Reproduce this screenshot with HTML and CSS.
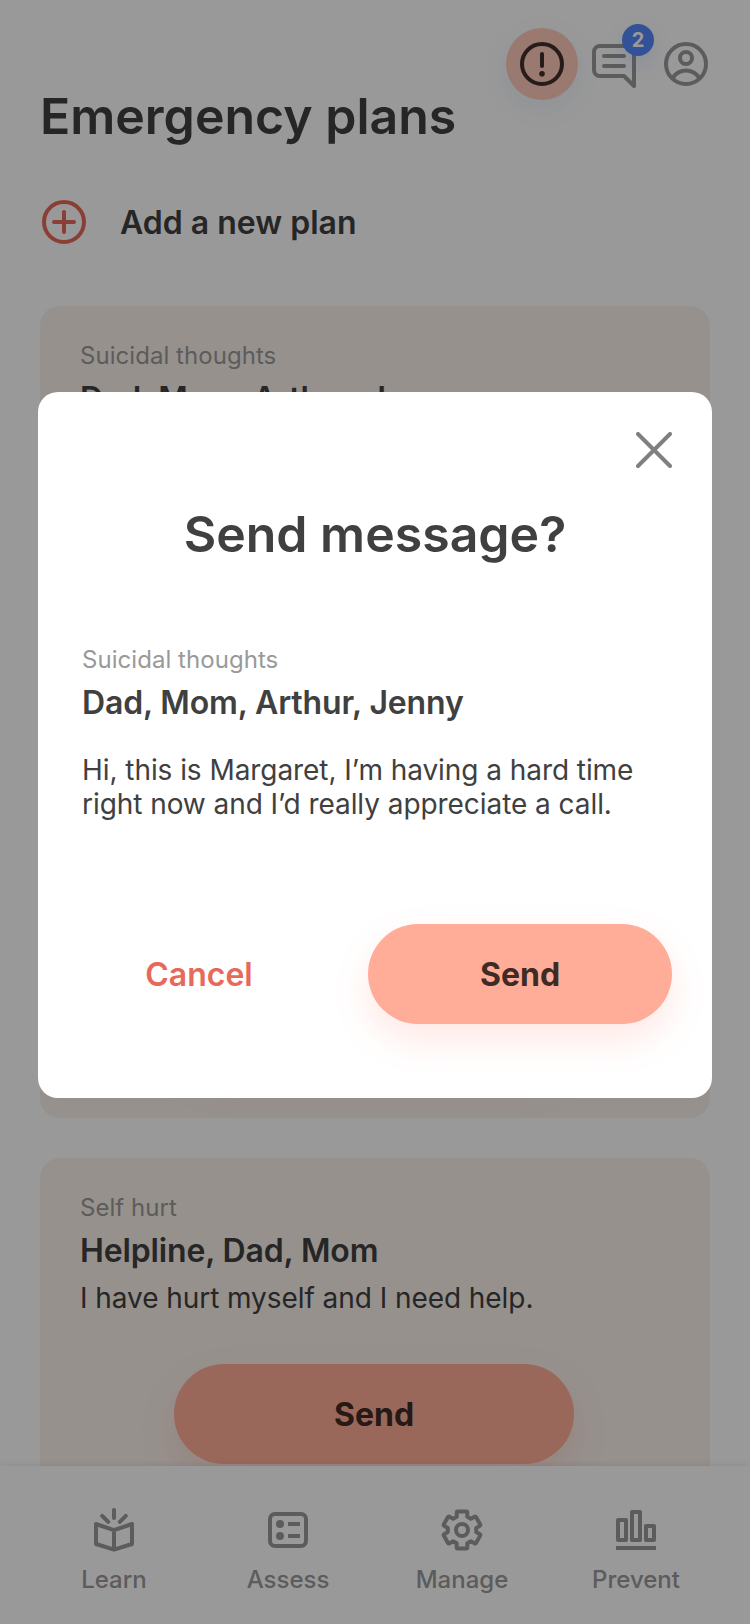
FILE: index.html
```html
<!DOCTYPE html>
<html lang="en">
<head>
<meta charset="utf-8">
<title>Emergency plans</title>
<link rel="stylesheet" href="styles.css">
</head>
<body>
<div class="app">
  <main class="screen">
    <header class="header">
      <h1 class="title">Emergency plans</h1>
      <div class="actions">
        <div class="alert">
          <svg class="icon" viewBox="0 0 48 48"><circle cx="24" cy="24" r="20"/><path d="M24 14v12"/><circle class="solid" cx="24" cy="33.8" r="2.8"/></svg>
        </div>
        <div class="chat">
          <svg class="icon" viewBox="0 0 48 48"><path d="M44 4H10a6 6 0 0 0-6 6v18a6 6 0 0 0 6 6h24l10 10z"/><path d="M14 14h20M14 24h20"/></svg>
          <span class="badge">2</span>
        </div>
        <svg class="icon profile" viewBox="0 0 48 48"><circle cx="24" cy="24" r="20"/><circle cx="24" cy="18" r="6"/><path d="M10.5 38C14 33 19 30.5 24 30.5S34 33 37.5 38"/></svg>
      </div>
    </header>
    <div class="add">
      <svg class="icon" viewBox="0 0 48 48"><circle cx="24" cy="24" r="20"/><path d="M24 14v20M14 24h20"/></svg>
      <span class="add-text">Add a new plan</span>
    </div>
    <section class="card card-tall">
      <p class="label">Suicidal thoughts</p>
      <p class="names">Dad, Mom, Arthur, Jenny</p>
      <div class="button card-button">Send</div>
    </section>
    <section class="card">
      <p class="label">Self hurt</p>
      <p class="names">Helpline, Dad, Mom</p>
      <p class="message">I have hurt myself and I need help.</p>
      <div class="button card-button">Send</div>
    </section>
  </main>
  <nav class="nav">
    <div class="tab">
      <svg class="icon" viewBox="0 0 48 48"><path d="M24 4v8M12.2 9.8l6 6M35.8 9.8l-6 6M24 43.7L6 38V18l18 6.2L42 18v20zM24 24.2v19"/></svg>
      <span>Learn</span>
    </div>
    <div class="tab">
      <svg class="icon" viewBox="0 0 48 48"><rect x="6" y="8" width="36" height="32" rx="5"/><circle class="solid" cx="16" cy="18" r="4"/><circle class="solid" cx="16" cy="30" r="4"/><path class="flat" d="M24 18h12M24 30h12"/></svg>
      <span>Assess</span>
    </div>
    <div class="tab">
      <svg class="icon" viewBox="-24 -24 48 48"><circle r="6"/><path d="M-4.3-18.6H4.3Q5.3-18.6 5.3-17.6V-13.3L8.9-11.2 12.6-13.4Q13.5-13.8 14-13L18.2-5.6Q18.7-4.7 17.8-4.2L14.2-2.1V2.1L17.8 4.2Q18.7 4.7 18.2 5.6L14 13Q13.5 13.8 12.6 13.4L8.9 11.2 5.3 13.3V17.6Q5.3 18.6 4.3 18.6H-4.3Q-5.3 18.6-5.3 17.6V13.3L-8.9 11.2-12.6 13.4Q-13.5 13.8-14 13L-18.2 5.6Q-18.7 4.7-17.8 4.2L-14.2 2.1V-2.1L-17.8-4.2Q-18.7-4.7-18.2-5.6L-14-13Q-13.5-13.8-12.6-13.4L-8.9-11.2-5.3-13.3V-17.6Q-5.3-18.6-4.3-18.6z"/></svg>
      <span>Manage</span>
    </div>
    <div class="tab">
      <svg class="icon" viewBox="0 0 48 48"><path d="M6 14h8v20H6zM20 6h8v28h-8zM34 20h8v14h-8z"/><path class="flat" d="M4 42h40"/></svg>
      <span>Prevent</span>
    </div>
  </nav>
  <div class="overlay">
    <div class="dialog">
      <svg class="close" viewBox="0 0 36 36"><path d="M2 2l32 32M34 2L2 34"/></svg>
      <h2 class="title dialog-title">Send message?</h2>
      <p class="label">Suicidal thoughts</p>
      <p class="names">Dad, Mom, Arthur, Jenny</p>
      <p class="message dialog-message">Hi, this is Margaret, I’m having a hard time right now and I’d really appreciate a call.</p>
      <div class="choices">
        <div class="cancel">Cancel</div>
        <div class="button">Send</div>
      </div>
    </div>
  </div>
</div>
</body>
</html>
```
FILE: styles.css
```css
* { box-sizing: border-box; }
body, h1, h2, p { margin: 0; }
body { font-family: Inter, "Liberation Sans", sans-serif; color: #404040; background: #fff; }

.app { position: relative; display: flex; flex-direction: column; width: 750px; height: 1624px; overflow: hidden; }
.screen { flex: 1; min-height: 0; overflow: hidden; padding: 0 40px; display: flex; flex-direction: column; }

.icon { display: block; flex: none; width: 48px; height: 48px; fill: none; stroke: currentColor; stroke-width: 4; stroke-linecap: round; stroke-linejoin: round; }
.icon .solid { fill: currentColor; stroke: none; }
.icon .flat { stroke-linecap: butt; }

.header { flex: none; display: flex; justify-content: space-between; height: 146px; }
.title { font-size: 50px; line-height: 60px; font-weight: 600; white-space: nowrap; }
.header .title { padding-top: 86px; }
.actions { display: flex; align-items: center; height: 72px; margin-top: 28px; color: #999; }
.alert { display: flex; align-items: center; justify-content: center; width: 72px; height: 72px; border-radius: 50%; background: #ffcabb; color: #40302c; box-shadow: 0 8px 24px rgba(90, 140, 220, .1); }
.chat { position: relative; margin: 4px 24px 0 12px; }
.badge { position: absolute; left: 32px; top: -18px; width: 32px; height: 32px; border-radius: 50%; background: #5688fa; color: #fff; font-size: 20px; line-height: 32px; font-weight: 700; text-align: center; box-shadow: 0 8px 20px rgba(86, 136, 250, .14); }

.add { flex: none; display: flex; align-items: center; gap: 32px; margin: 52px 0 60px; color: #e7695a; }
.add-text { padding-top: 2px; color: #404040; font-size: 32px; line-height: 40px; font-weight: 600; }

.card { flex: none; display: flex; flex-direction: column; padding: 35px 40px 50px; margin-bottom: 40px; border-radius: 20px; background: #fbf2ec; }
.card-tall { height: 812px; }
.label { font-size: 24px; line-height: 30px; color: #999; letter-spacing: .05px; }
.names { font-size: 32px; line-height: 40px; font-weight: 600; margin-top: 8px; letter-spacing: -.14px; }
.message { font-size: 28px; line-height: 34px; margin-top: 10px; letter-spacing: -.06px; }

.button { display: flex; align-items: center; justify-content: center; height: 100px; border-radius: 50px; background: #ffad98; color: #402a25; font-size: 32px; font-weight: 700; box-shadow: 0 16px 36px rgba(255, 100, 80, .15); }
.card-button { flex: none; width: 400px; margin: 49px 0 0 94px; }
.card-tall .card-button { margin-top: auto; }

.nav { position: relative; flex: none; display: flex; height: 158px; padding: 40px 27px 0; background: #fff; color: #999; box-shadow: 0 0 8px rgba(0, 0, 0, .1); }
.tab { flex: 1; display: flex; flex-direction: column; align-items: center; gap: 11px; font-size: 24px; line-height: 30px; font-weight: 500; }

.overlay { position: absolute; inset: 0; padding: 392px 38px 0; background: rgba(0, 0, 0, .4); }
.dialog { display: flex; flex-direction: column; height: 706px; padding: 40px 40px 74px 44px; border-radius: 20px; background: #fff; }
.close { display: block; width: 36px; height: 36px; align-self: flex-end; fill: none; stroke: #808080; stroke-width: 4; stroke-linecap: round; }
.dialog-title { margin: 36px 4px 81px 0; text-align: center; }
.dialog-message { margin-top: 30px; width: 580px; }
.choices { display: grid; grid-template-columns: 234px 304px; justify-content: space-between; align-items: center; margin-top: auto; }
.cancel { color: #e7695a; font-size: 32px; font-weight: 600; text-align: center; }
```
